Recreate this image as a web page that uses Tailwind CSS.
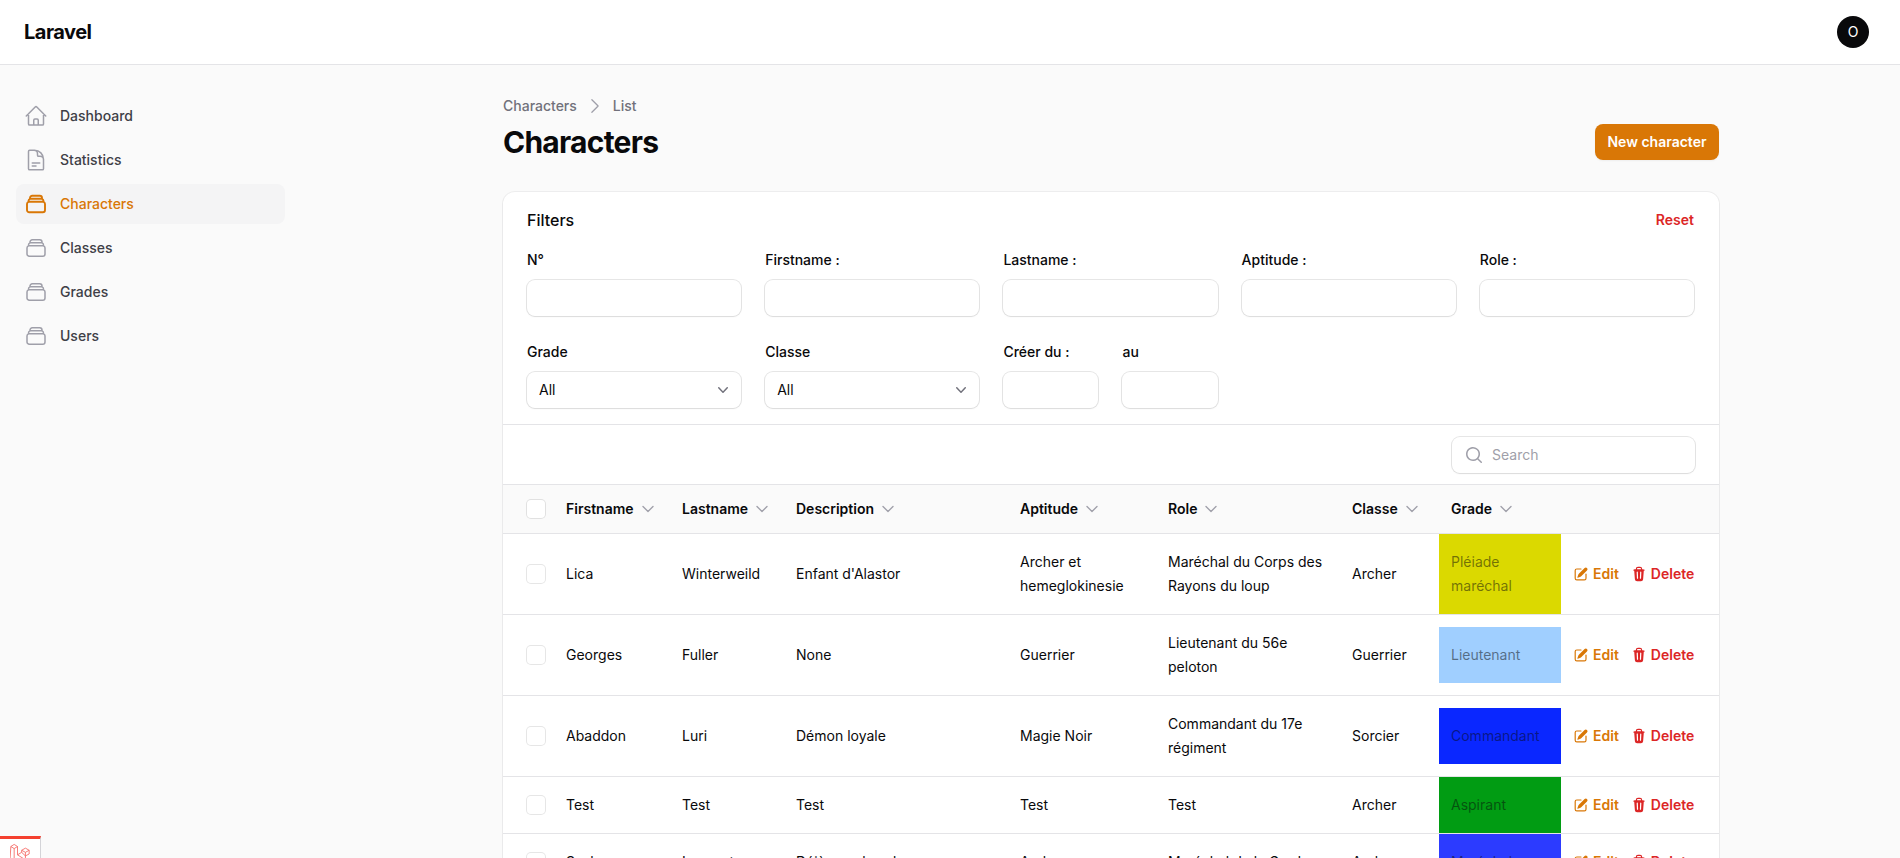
<!DOCTYPE html>
<html lang="en">
<head>
  <meta charset="UTF-8" />
  <title>Characters - Laravel</title>
  <script src="https://cdn.jsdelivr.net/npm/@tailwindcss/browser@4"></script>
</head>
<body class="bg-[#fafafa] font-['Inter',sans-serif] text-zinc-950">

<!-- Shared icons -->
<svg class="hidden">
  <symbol id="stack" viewBox="0 0 24 24"><path fill="none" stroke="currentColor" stroke-linecap="round" stroke-linejoin="round" d="M6 6.878V6a2.25 2.25 0 0 1 2.25-2.25h7.5A2.25 2.25 0 0 1 18 6v.878m-12 0c.235-.083.487-.128.75-.128h10.5c.263 0 .515.045.75.128m-12 0A2.25 2.25 0 0 0 4.5 9v.878m13.5-3A2.25 2.25 0 0 1 19.5 9v.878m0 0a2.246 2.246 0 0 0-.75-.128H5.25c-.263 0-.515.045-.75.128m15 0A2.25 2.25 0 0 1 21 12v6a2.25 2.25 0 0 1-2.25 2.25H5.25A2.25 2.25 0 0 1 3 18v-6c0-.98.626-1.813 1.5-2.122"/></symbol>
  <symbol id="sort" viewBox="0 0 24 24"><path fill="none" stroke="currentColor" stroke-width="2" stroke-linecap="round" stroke-linejoin="round" d="m19.5 8.25-7.5 7.5-7.5-7.5"/></symbol>
  <symbol id="select" viewBox="0 0 20 20"><path fill="currentColor" fill-rule="evenodd" clip-rule="evenodd" d="M5.23 7.21a.75.75 0 0 1 1.06.02L10 11.168l3.71-3.938a.75.75 0 1 1 1.08 1.04l-4.25 4.5a.75.75 0 0 1-1.08 0l-4.25-4.5a.75.75 0 0 1 .02-1.06Z"/></symbol>
  <symbol id="edit" viewBox="0 0 20 20"><path fill="currentColor" d="m5.433 13.917 1.262-3.155A4 4 0 0 1 7.58 9.42l6.92-6.918a2.121 2.121 0 0 1 3 3l-6.92 6.918c-.383.383-.84.685-1.343.886l-3.154 1.262a.5.5 0 0 1-.65-.65Z"/><path fill="currentColor" d="M3.5 5.75c0-.69.56-1.25 1.25-1.25H10A.75.75 0 0 0 10 3H4.75A2.75 2.75 0 0 0 2 5.75v9.5A2.75 2.75 0 0 0 4.75 18h9.5A2.75 2.75 0 0 0 17 15.25V10a.75.75 0 0 0-1.5 0v5.25c0 .69-.56 1.25-1.25 1.25h-9.5c-.69 0-1.25-.56-1.25-1.25v-9.5Z"/></symbol>
  <symbol id="trash" viewBox="0 0 20 20"><path fill="currentColor" fill-rule="evenodd" clip-rule="evenodd" d="M8.75 1A2.75 2.75 0 0 0 6 3.75v.443c-.795.077-1.584.176-2.365.298a.75.75 0 1 0 .23 1.482l.149-.022.841 10.518A2.75 2.75 0 0 0 7.596 19h4.807a2.75 2.75 0 0 0 2.742-2.53l.841-10.52.149.023a.75.75 0 1 0 .23-1.482A41.03 41.03 0 0 0 14 4.193V3.75A2.75 2.75 0 0 0 11.25 1h-2.5ZM10 4c.84 0 1.673.025 2.5.075V3.75c0-.69-.56-1.25-1.25-1.25h-2.5c-.69 0-1.25.56-1.25 1.25v.325C8.327 4.025 9.16 4 10 4ZM8.58 7.72a.75.75 0 0 0-1.5.06l.3 7.5a.75.75 0 1 0 1.5-.06l-.3-7.5Zm4.34.06a.75.75 0 1 0-1.5-.06l-.3 7.5a.75.75 0 1 0 1.5.06l.3-7.5Z"/></symbol>
</svg>

<div class="h-[858px] overflow-hidden flex flex-col relative">

  <!-- Topbar -->
  <header class="h-[65px] shrink-0 bg-white border-b border-zinc-200 flex items-center justify-between pl-6 pr-[31px]">
    <span class="text-xl font-bold tracking-tight leading-5">Laravel</span>
    <div class="w-8 h-8 rounded-full bg-[#09090b] text-white text-sm flex items-center justify-center">O</div>
  </header>

  <div class="flex flex-1 min-h-0">
    <!-- Sidebar -->
    <aside class="w-[320px] shrink-0 pl-4 pr-[35px] pt-[31px]">
      <nav class="flex flex-col gap-1 text-sm font-medium text-zinc-700">
        <a class="flex items-center gap-3 h-10 px-2 rounded-lg">
          <svg class="w-6 h-6 text-zinc-400" fill="none" viewBox="0 0 24 24" stroke-width="1.5" stroke="currentColor"><path stroke-linecap="round" stroke-linejoin="round" d="m2.25 12 8.954-8.955c.44-.439 1.152-.439 1.591 0L21.75 12M4.5 9.75v10.125c0 .621.504 1.125 1.125 1.125H9.75v-4.875c0-.621.504-1.125 1.125-1.125h2.25c.621 0 1.125.504 1.125 1.125V21h4.125c.621 0 1.125-.504 1.125-1.125V9.75M8.25 21h8.25"/></svg>
          Dashboard
        </a>
        <a class="flex items-center gap-3 h-10 px-2 rounded-lg">
          <svg class="w-6 h-6 text-zinc-400" fill="none" viewBox="0 0 24 24" stroke-width="1.5" stroke="currentColor"><path stroke-linecap="round" stroke-linejoin="round" d="M19.5 14.25v-2.625a3.375 3.375 0 0 0-3.375-3.375h-1.5A1.125 1.125 0 0 1 13.5 7.125v-1.5a3.375 3.375 0 0 0-3.375-3.375H8.25m0 12.75h7.5m-7.5 3H12M10.5 2.25H5.625c-.621 0-1.125.504-1.125 1.125v17.25c0 .621.504 1.125 1.125 1.125h12.75c.621 0 1.125-.504 1.125-1.125V11.25a9 9 0 0 0-9-9Z"/></svg>
          Statistics
        </a>
        <a class="flex items-center gap-3 h-10 px-2 rounded-lg bg-zinc-100 text-[#d97706]">
          <svg class="w-6 h-6 stroke-[1.9]"><use href="#stack"/></svg>
          Characters
        </a>
        <a class="flex items-center gap-3 h-10 px-2 rounded-lg">
          <svg class="w-6 h-6 text-zinc-400 stroke-[1.5]"><use href="#stack"/></svg>
          Classes
        </a>
        <a class="flex items-center gap-3 h-10 px-2 rounded-lg">
          <svg class="w-6 h-6 text-zinc-400 stroke-[1.5]"><use href="#stack"/></svg>
          Grades
        </a>
        <a class="flex items-center gap-3 h-10 px-2 rounded-lg">
          <svg class="w-6 h-6 text-zinc-400 stroke-[1.5]"><use href="#stack"/></svg>
          Users
        </a>
      </nav>
    </aside>

    <!-- Main -->
    <main class="flex-1 min-w-0 pl-[183px] pr-[181px] pt-8">
      <div class="flex items-center gap-2 text-sm font-medium text-zinc-500 h-5 mt-[-1px]">
        <span>Characters</span>
        <svg class="w-5 h-5 text-zinc-400" viewBox="0 0 24 24" fill="none" stroke="currentColor" stroke-width="1.5"><path stroke-linecap="round" stroke-linejoin="round" d="m8.25 4.5 7.5 7.5-7.5 7.5"/></svg>
        <span>List</span>
      </div>
      <div class="flex items-center justify-between mt-2 h-9">
        <h1 class="text-3xl font-bold tracking-tight leading-9">Characters</h1>
        <button class="h-9 px-[12.5px] rounded-lg bg-[#d97706] text-white text-sm font-semibold shadow-xs">New character</button>
      </div>

      <!-- Card -->
      <section class="mt-8 bg-white rounded-xl ring-1 ring-zinc-950/5 shadow-xs">
        <!-- Filters -->
        <div class="pl-6 pr-[25px] pt-4 pb-4 border-b border-zinc-200">
          <div class="flex items-center justify-between h-6">
            <h2 class="text-base font-medium leading-6">Filters</h2>
            <a class="text-sm font-semibold text-[#dc2626]">Reset</a>
          </div>
          <div class="grid grid-cols-5 gap-6 mt-4 text-sm leading-6">
            <div><label class="block font-medium">N°</label><div class="mt-2 h-9 rounded-lg bg-white ring-1 ring-zinc-950/10 shadow-xs"></div></div>
            <div><label class="block font-medium">Firstname :</label><div class="mt-2 h-9 rounded-lg bg-white ring-1 ring-zinc-950/10 shadow-xs"></div></div>
            <div><label class="block font-medium">Lastname :</label><div class="mt-2 h-9 rounded-lg bg-white ring-1 ring-zinc-950/10 shadow-xs"></div></div>
            <div><label class="block font-medium">Aptitude :</label><div class="mt-2 h-9 rounded-lg bg-white ring-1 ring-zinc-950/10 shadow-xs"></div></div>
            <div><label class="block font-medium">Role :</label><div class="mt-2 h-9 rounded-lg bg-white ring-1 ring-zinc-950/10 shadow-xs"></div></div>
            <div>
              <label class="block font-medium">Grade</label>
              <div class="mt-2 h-9 rounded-lg bg-white ring-1 ring-zinc-950/10 shadow-xs flex items-center justify-between pl-3 pr-2">All
                <svg class="w-5 h-5 text-zinc-500"><use href="#select"/></svg>
              </div>
            </div>
            <div>
              <label class="block font-medium">Classe</label>
              <div class="mt-2 h-9 rounded-lg bg-white ring-1 ring-zinc-950/10 shadow-xs flex items-center justify-between pl-3 pr-2">All
                <svg class="w-5 h-5 text-zinc-500"><use href="#select"/></svg>
              </div>
            </div>
            <div class="grid grid-cols-2 gap-x-6">
              <div><label class="block font-medium">Créer du :</label><div class="mt-2 h-9 rounded-lg bg-white ring-1 ring-zinc-950/10 shadow-xs"></div></div>
              <div><label class="block font-medium">au</label><div class="mt-2 h-9 rounded-lg bg-white ring-1 ring-zinc-950/10 shadow-xs"></div></div>
            </div>
          </div>
        </div>

        <!-- Search -->
        <div class="h-[60px] border-b border-zinc-200 flex items-center justify-end px-6">
          <div class="w-[243px] h-9 rounded-lg ring-1 ring-zinc-950/10 shadow-xs flex items-center gap-2 pl-3 text-sm text-zinc-400">
            <svg class="w-5 h-5" viewBox="0 0 20 20" fill="currentColor"><path fill-rule="evenodd" clip-rule="evenodd" d="M9 3.5a5.5 5.5 0 1 0 0 11 5.5 5.5 0 0 0 0-11ZM2 9a7 7 0 1 1 12.452 4.391l3.328 3.329a.75.75 0 1 1-1.06 1.06l-3.329-3.328A7 7 0 0 1 2 9Z"/></svg>
            Search
          </div>
        </div>

        <!-- Table -->
        <table class="w-full table-fixed text-sm text-left">
          <colgroup>
            <col class="w-[47px]"><col class="w-[116px]"><col class="w-[114px]"><col class="w-[224px]"><col class="w-[148px]"><col class="w-[184px]"><col class="w-[103px]"><col class="w-[122px]"><col>
          </colgroup>
          <thead class="bg-zinc-50">
            <tr class="h-[48px] border-b border-zinc-200">
              <th class="pl-6"><span class="block w-[18px] h-[18px] rounded bg-white ring-1 ring-zinc-950/10"></span></th>
              <th class="px-4"><span class="flex items-center gap-1.5 font-semibold whitespace-nowrap">Firstname <svg class="w-4 h-4 shrink-0 text-zinc-400"><use href="#sort"/></svg></span></th>
              <th class="px-4"><span class="flex items-center gap-1.5 font-semibold whitespace-nowrap">Lastname <svg class="w-4 h-4 shrink-0 text-zinc-400"><use href="#sort"/></svg></span></th>
              <th class="px-4"><span class="flex items-center gap-1.5 font-semibold whitespace-nowrap">Description <svg class="w-4 h-4 shrink-0 text-zinc-400"><use href="#sort"/></svg></span></th>
              <th class="px-4"><span class="flex items-center gap-1.5 font-semibold whitespace-nowrap">Aptitude <svg class="w-4 h-4 shrink-0 text-zinc-400"><use href="#sort"/></svg></span></th>
              <th class="px-4"><span class="flex items-center gap-1.5 font-semibold whitespace-nowrap">Role <svg class="w-4 h-4 shrink-0 text-zinc-400"><use href="#sort"/></svg></span></th>
              <th class="px-4"><span class="flex items-center gap-1.5 font-semibold whitespace-nowrap">Classe <svg class="w-4 h-4 shrink-0 text-zinc-400"><use href="#sort"/></svg></span></th>
              <th class="px-3"><span class="flex items-center gap-1.5 font-semibold whitespace-nowrap">Grade <svg class="w-4 h-4 shrink-0 text-zinc-400"><use href="#sort"/></svg></span></th>
              <th></th>
            </tr>
          </thead>
          <tbody class="leading-6 divide-y divide-zinc-200">
            <tr>
              <td class="pl-6"><span class="block w-[18px] h-[18px] rounded bg-white ring-1 ring-zinc-950/10"></span></td>
              <td class="px-4">Lica</td>
              <td class="px-4">Winterweild</td>
              <td class="px-4">Enfant d'Alastor</td>
              <td class="px-4">Archer et hemeglokinesie</td>
              <td class="pl-4 pr-2">Maréchal du Corps des Rayons du loup</td>
              <td class="px-4">Archer</td>
              <td><div class="px-3 py-4 bg-[#dbd900] text-zinc-950/50">Pléiade maréchal</div></td>
              <td class="pl-3"><div class="flex items-center gap-3 font-semibold">
                <span class="flex items-center gap-1 text-[#d97706]"><svg class="w-4 h-4"><use href="#edit"/></svg>Edit</span>
                <span class="flex items-center gap-1 text-[#dc2626]"><svg class="w-4 h-4"><use href="#trash"/></svg>Delete</span>
              </div></td>
            </tr>
            <tr>
              <td class="pl-6"><span class="block w-[18px] h-[18px] rounded bg-white ring-1 ring-zinc-950/10"></span></td>
              <td class="px-4">Georges</td>
              <td class="px-4">Fuller</td>
              <td class="px-4">None</td>
              <td class="px-4">Guerrier</td>
              <td class="pl-4 pr-2 py-4">Lieutenant du 56e peloton</td>
              <td class="px-4">Guerrier</td>
              <td><div class="px-3 py-4 bg-[#a0cfff] text-zinc-950/50">Lieutenant</div></td>
              <td class="pl-3"><div class="flex items-center gap-3 font-semibold">
                <span class="flex items-center gap-1 text-[#d97706]"><svg class="w-4 h-4"><use href="#edit"/></svg>Edit</span>
                <span class="flex items-center gap-1 text-[#dc2626]"><svg class="w-4 h-4"><use href="#trash"/></svg>Delete</span>
              </div></td>
            </tr>
            <tr>
              <td class="pl-6"><span class="block w-[18px] h-[18px] rounded bg-white ring-1 ring-zinc-950/10"></span></td>
              <td class="px-4">Abaddon</td>
              <td class="px-4">Luri</td>
              <td class="px-4">Démon loyale</td>
              <td class="px-4">Magie Noir</td>
              <td class="pl-4 pr-2 py-4">Commandant du 17e régiment</td>
              <td class="px-4">Sorcier</td>
              <td><div class="px-3 py-4 bg-[#0a27ff] text-zinc-950/50">Commandant</div></td>
              <td class="pl-3"><div class="flex items-center gap-3 font-semibold">
                <span class="flex items-center gap-1 text-[#d97706]"><svg class="w-4 h-4"><use href="#edit"/></svg>Edit</span>
                <span class="flex items-center gap-1 text-[#dc2626]"><svg class="w-4 h-4"><use href="#trash"/></svg>Delete</span>
              </div></td>
            </tr>
            <tr>
              <td class="pl-6"><span class="block w-[18px] h-[18px] rounded bg-white ring-1 ring-zinc-950/10"></span></td>
              <td class="px-4">Test</td>
              <td class="px-4">Test</td>
              <td class="px-4">Test</td>
              <td class="px-4">Test</td>
              <td class="px-4">Test</td>
              <td class="px-4">Archer</td>
              <td><div class="px-3 py-4 bg-[#019c13] text-zinc-950/50">Aspirant</div></td>
              <td class="pl-3"><div class="flex items-center gap-3 font-semibold">
                <span class="flex items-center gap-1 text-[#d97706]"><svg class="w-4 h-4"><use href="#edit"/></svg>Edit</span>
                <span class="flex items-center gap-1 text-[#dc2626]"><svg class="w-4 h-4"><use href="#trash"/></svg>Delete</span>
              </div></td>
            </tr>
            <tr>
              <td class="pl-6"><span class="block w-[18px] h-[18px] rounded bg-white ring-1 ring-zinc-950/10"></span></td>
              <td class="px-4">Sasha</td>
              <td class="px-4">Lancaster</td>
              <td class="px-4">Déjà membre du</td>
              <td class="px-4">Archer</td>
              <td class="px-4">Maréchal de la Garde</td>
              <td class="px-4">Archer</td>
              <td><div class="px-3 py-4 bg-[#2c3bff] text-zinc-950/50">Maréchal</div></td>
              <td class="pl-3"><div class="flex items-center gap-3 font-semibold">
                <span class="flex items-center gap-1 text-[#d97706]"><svg class="w-4 h-4"><use href="#edit"/></svg>Edit</span>
                <span class="flex items-center gap-1 text-[#dc2626]"><svg class="w-4 h-4"><use href="#trash"/></svg>Delete</span>
              </div></td>
            </tr>
          </tbody>
        </table>
      </section>
    </main>
  </div>

  <!-- Debugbar handle -->
  <div class="absolute left-0 bottom-0 w-[41px] h-[22px] bg-white border-t-[3px] border-t-[#f4402f] border-r border-r-zinc-300 flex justify-center pt-[3px]">
    <svg class="w-5 h-6 shrink-0 text-[#f4645f]" viewBox="0 0 24 28" fill="none" stroke="currentColor" stroke-width="1" stroke-linejoin="round"><path d="M1 5l4-2.5L9 5v10l5-3V9.5l4.5-2.5 4.5 2.5V14l-4.5 2.3V21l-9.5 5-9-5zM1 5l4 2.5L9 5M5 7.500V21M14 9.500l4.500 2.500 4.500-2.500M18.500 12v4.300M14 12l4.500 4.300M9 15l9.500 6"/></svg>
  </div>
</div>
</body>
</html>
